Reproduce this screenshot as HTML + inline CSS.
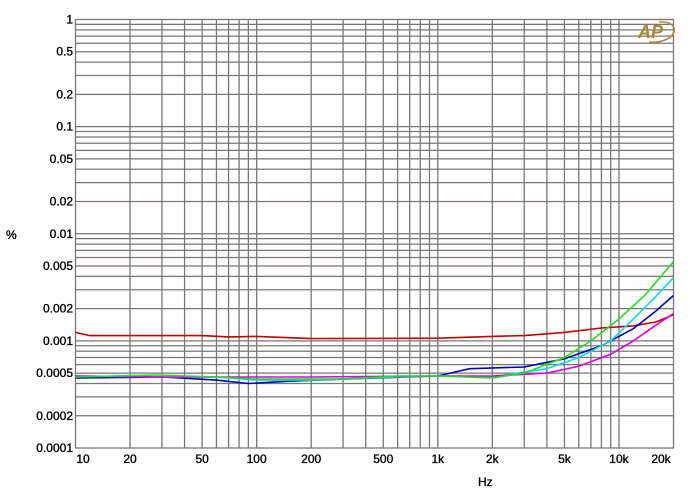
<!DOCTYPE html>
<html><head><style>
body{margin:0;background:#fffdfd;}
svg{display:block;font-family:"Liberation Sans",sans-serif;}
</style></head><body>
<svg id="s" width="690" height="500" xmlns="http://www.w3.org/2000/svg">
<rect width="690" height="500" fill="#fffdfd"/>
<g id="grid" stroke="#777" stroke-width="1.3" fill="none"></g>
<g id="lab" font-size="12" fill="#000" stroke="#000" stroke-width="0.35"></g>
<g id="curves" fill="none" stroke-width="1.6"></g>
<text x="6" y="239" font-size="12" stroke="#000" stroke-width="0.35">%</text>
<text x="478" y="486" font-size="12" stroke="#000" stroke-width="0.35">Hz</text>
<g transform="translate(637,21)">
<path d="M22 1 C34 0 40 6 36 13 C32 19 22 22 12 21" fill="none" stroke="#b08a3e" stroke-width="1.6"/>
<text x="1" y="17" font-size="18" font-style="italic" font-weight="bold" fill="#a8843a" font-family="Liberation Sans,sans-serif">AP</text>
</g>
</svg>
<script>
var L=75.5,R=673.5,T=19.5,B=448,D=(R-L)/Math.log10(2000),Y=(B-T)/4;
function X(f){return L+Math.log10(f/10)*D}
function Yv(v){return T-Math.log10(v)*Y}
var g=document.getElementById('grid'),h='';
h+='<rect x="'+L+'" y="'+T+'" width="'+(R-L)+'" height="'+(B-T)+'"/>';
for(var d=10;d<=10000;d*=10)for(var i=1;i<10;i++){var f=d*i;if(f>10&&f<20000)h+='<line x1="'+X(f)+'" x2="'+X(f)+'" y1="'+T+'" y2="'+B+'"/>';}
for(var d=0.0001;d<1;d*=10)for(var i=1;i<10;i++){var v=d*i;if(v>0.00011&&v<1)h+='<line x1="'+L+'" x2="'+R+'" y1="'+Yv(v)+'" y2="'+Yv(v)+'"/>';}
g.innerHTML=h;
var lab='',yl=[[1,'1'],[0.5,'0.5'],[0.2,'0.2'],[0.1,'0.1'],[0.05,'0.05'],[0.02,'0.02'],[0.01,'0.01'],[0.005,'0.005'],[0.002,'0.002'],[0.001,'0.001'],[0.0005,'0.0005'],[0.0002,'0.0002'],[0.0001,'0.0001']];
yl.forEach(function(a){lab+='<text x="73" y="'+(Yv(a[0])+4)+'" text-anchor="end">'+a[1]+'</text>'});
var xl=[[10,'10'],[20,'20'],[50,'50'],[100,'100'],[200,'200'],[500,'500'],[1000,'1k'],[2000,'2k'],[5000,'5k'],[10000,'10k'],[20000,'20k']];
xl.forEach(function(a){var x=X(a[0]);if(a[0]==10)x=83;if(a[0]==20000)x=661;lab+='<text x="'+x+'" y="463" text-anchor="middle">'+a[1]+'</text>'});
document.getElementById('lab').innerHTML=lab;
var C=[
['#c00000',[[10,0.0012],[12,0.00112],[50,0.00112],[70,0.00109],[100,0.0011],[200,0.00105],[1000,0.00106],[2000,0.0011],[3000,0.00112],[5000,0.0012],[8000,0.00132],[12000,0.00138],[16000,0.0015],[20000,0.00175]]],
['#0000c0',[[10,0.00045],[30,0.00046],[60,0.00043],[90,0.0004],[150,0.00042],[300,0.00044],[1000,0.00047],[1500,0.00055],[3000,0.00057],[5000,0.00068],[8000,0.0009],[12000,0.0013],[16000,0.0019],[20000,0.00265]]],
['#00e0e0',[[10,0.00047],[30,0.00046],[60,0.00046],[100,0.00043],[200,0.00043],[600,0.00046],[1000,0.00047],[2000,0.00046],[4000,0.00055],[6000,0.0007],[9000,0.001],[12000,0.0016],[16000,0.0026],[20000,0.0039]]],
['#e000e0',[[10,0.00047],[30,0.00046],[100,0.00046],[200,0.00046],[1000,0.00047],[2000,0.00047],[4000,0.0005],[6000,0.00058],[9000,0.00075],[12000,0.001],[16000,0.0014],[20000,0.0018]]],
['#20e020',[[10,0.00046],[28,0.00048],[60,0.00046],[100,0.00044],[300,0.00044],[600,0.00047],[1000,0.00047],[2000,0.00045],[3000,0.0005],[5000,0.0007],[7000,0.001],[10000,0.0016],[14000,0.0027],[20000,0.0055]]]];
var s='';C.forEach(function(c){s+='<polyline stroke="'+c[0]+'" points="'+c[1].map(function(p){return X(p[0]).toFixed(1)+','+Yv(p[1]).toFixed(1)}).join(' ')+'"/>'});
document.getElementById('curves').innerHTML=s;
</script>
</body></html>
